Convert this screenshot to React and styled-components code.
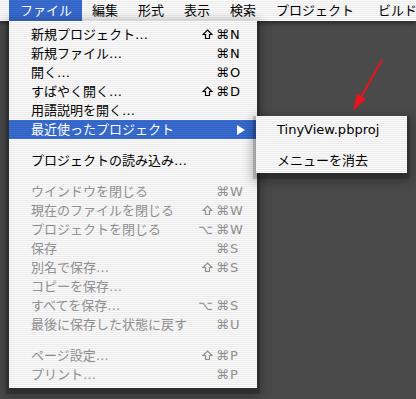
import React from 'react';
import styled, { createGlobalStyle } from 'styled-components';

const GlobalStyle = createGlobalStyle`
  html, body {
    margin: 0;
    padding: 0;
    background: #4a4a4a;
  }
  body {
    width: 416px;
    height: 399px;
    overflow: hidden;
    font-family: "DejaVu Sans", "Noto Sans CJK JP", sans-serif;
  }
`;

const stripes = `repeating-linear-gradient(to bottom, #fbfbfb 0px, #fbfbfb 1px, #ebebeb 1px, #ebebeb 2px)`;
const blueStripes = `repeating-linear-gradient(to bottom, #3a6dcf 0px, #3a6dcf 1px, #3163c4 1px, #3163c4 2px)`;

const Screen = styled.div`
  position: relative;
  width: 416px;
  height: 399px;
  display: flex;
  flex-direction: column;
  background: #4a4a4a;
  overflow: hidden;
`;

const MenuBar = styled.div`
  position: relative;
  z-index: 2;
  display: flex;
  height: 21px;
  padding-left: 9px;
  background: ${stripes};
  box-shadow: 0 2px 5px rgba(0, 0, 0, 0.5);
`;

const MenuTitle = styled.div`
  position: relative;
  padding: 0 10px 0 ${p => (p.$first ? 11 : 10)}px;
  margin-right: ${p => (p.$wide ? 4 : 0)}px;
  line-height: 21px;
  font-size: 13px;
  white-space: nowrap;
  color: ${p => (p.$open ? '#fff' : '#000')};
  background: ${p => (p.$open ? blueStripes : 'transparent')};
`;

const Dropdown = styled.div`
  position: absolute;
  top: 21px;
  left: 0;
  width: 248px;
  padding: 4px 0 4px;
  background: ${stripes};
  box-shadow: 0 3px 0 3px rgba(0, 0, 0, 0.18), 0 4px 10px 4px rgba(0, 0, 0, 0.3);
  z-index: 3;
`;

const Item = styled.div`
  position: relative;
  display: flex;
  align-items: center;
  height: 19px;
  padding: 0 14px 0 ${p => p.$indent || 22}px;
  font-size: 13px;
  line-height: 19px;
  white-space: nowrap;
  color: ${p => (p.$selected ? '#fff' : p.$disabled ? '#8f8f8f' : '#000')};
  background: ${p => (p.$selected ? blueStripes : 'transparent')};
`;

const Label = styled.span`
  flex: 1;
`;

const Shortcut = styled.span`
  display: grid;
  grid-template-columns: auto 13px;
  align-items: center;
`;

const Mods = styled.span`
  display: flex;
  justify-content: flex-end;
  align-items: center;
  gap: 3px;
  padding-right: 1px;
`;

const ShiftIcon = styled.svg`
  width: 11px;
  height: 11px;
`;

const Key = styled.span`
  text-align: left;
`;

const Separator = styled.div`
  height: 12px;
`;

const SubArrow = styled.svg`
  width: 8px;
  height: 10px;
  margin-right: -2px;
`;

const Submenu = styled.div`
  position: absolute;
  top: -4px;
  left: calc(100% - 1px);
  width: 151px;
  padding: 4px 0 3px;
  background: ${stripes};
  box-shadow: 0 3px 0 3px rgba(0, 0, 0, 0.16), 0 5px 10px 4px rgba(0, 0, 0, 0.28);
`;

const Desktop = styled.div`
  position: relative;
  flex: 1;
`;

const Annotation = styled.svg`
  position: absolute;
  left: 340px;
  top: 34px;
  width: 50px;
  height: 62px;
`;

const titles = ['ファイル', '編集', '形式', '表示', '検索', 'プロジェクト', 'ビルド'];

const items = [
  { label: '新規プロジェクト…', mods: '⇧⌘', key: 'N' },
  { label: '新規ファイル…', mods: '⌘', key: 'N' },
  { label: '開く…', mods: '⌘', key: 'O' },
  { label: 'すばやく開く…', mods: '⇧⌘', key: 'D' },
  { label: '用語説明を開く…' },
  { label: '最近使ったプロジェクト', submenu: true },
  { sep: true },
  { label: 'プロジェクトの読み込み…' },
  { sep: true },
  { label: 'ウインドウを閉じる', mods: '⌘', key: 'W', disabled: true },
  { label: '現在のファイルを閉じる', mods: '⇧⌘', key: 'W', disabled: true },
  { label: 'プロジェクトを閉じる', mods: '⌥⌘', key: 'W', disabled: true },
  { label: '保存', mods: '⌘', key: 'S', disabled: true },
  { label: '別名で保存…', mods: '⇧⌘', key: 'S', disabled: true },
  { label: 'コピーを保存…', disabled: true },
  { label: 'すべてを保存…', mods: '⌥⌘', key: 'S', disabled: true },
  { label: '最後に保存した状態に戻す', mods: '⌘', key: 'U', disabled: true },
  { sep: true },
  { label: 'ページ設定…', mods: '⇧⌘', key: 'P', disabled: true },
  { label: 'プリント…', mods: '⌘', key: 'P', disabled: true },
];

function Modifiers({ mods }) {
  return (
    <Mods>
      {mods.split('').map((m, i) =>
        m === '⇧' ? (
          <ShiftIcon key={i} viewBox="0 0 11 11">
            <polygon
              points="5.5,1 10,5.5 7.5,5.5 7.5,9.5 3.5,9.5 3.5,5.5 1,5.5"
              fill="none"
              stroke="currentColor"
              strokeWidth="1.2"
            />
          </ShiftIcon>
        ) : (
          <span key={i}>{m}</span>
        )
      )}
    </Mods>
  );
}

function RecentMenu() {
  return (
    <Submenu>
      <Item $indent={21}><Label>TinyView.pbproj</Label></Item>
      <Separator />
      <Item $indent={21}><Label>メニューを消去</Label></Item>
    </Submenu>
  );
}

function FileMenu() {
  return (
    <Dropdown>
      {items.map((it, i) => {
        if (it.sep) return <Separator key={i} />;
        return (
          <Item key={i} $disabled={it.disabled} $selected={it.submenu}>
            <Label>{it.label}</Label>
            {it.key && (
              <Shortcut>
                <Modifiers mods={it.mods} />
                <Key>{it.key}</Key>
              </Shortcut>
            )}
            {it.submenu && (
              <>
                <SubArrow viewBox="0 0 8 10">
                  <polygon points="0,0 8,5 0,10" fill="#fff" />
                </SubArrow>
                <RecentMenu />
              </>
            )}
          </Item>
        );
      })}
    </Dropdown>
  );
}

export default function App() {
  return (
    <>
      <GlobalStyle />
      <Screen>
        <MenuBar>
          {titles.map((t, i) => (
            <MenuTitle key={t} $first={i === 0} $open={i === 0} $wide={t === 'プロジェクト'}>
              {t}
              {i === 0 && <FileMenu />}
            </MenuTitle>
          ))}
        </MenuBar>
        <Desktop>
          <Annotation viewBox="0 0 50 62">
            <line x1="42" y1="5" x2="21" y2="42" stroke="#e8141c" strokeWidth="2" />
            <polygon points="13,56 26,44 17,38.5" fill="#e8141c" />
          </Annotation>
        </Desktop>
      </Screen>
    </>
  );
}
